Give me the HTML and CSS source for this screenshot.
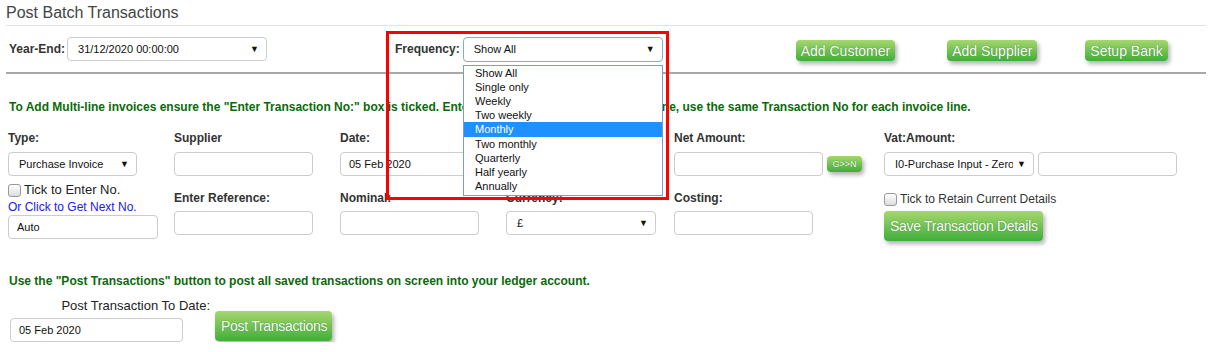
FILE: index.html
```html
<!DOCTYPE html>
<html lang="en">
<head>
    <meta charset="UTF-8">
    <title>Post Batch Transactions</title>
    <link rel="stylesheet" href="styles.css">
</head>
<body>
    <div class="page">
        <h1 class="title">Post Batch Transactions</h1>

        <div class="topbar">
            <div class="field-inline">
                <span class="lbl">Year-End:</span>
                <div class="select year"><span>31/12/2020 00:00:00</span><span class="arrow">&#9660;</span></div>
            </div>
            <div class="field-inline freq">
                <span class="lbl">Frequency:</span>
                <div class="select focus"><span>Show All</span><span class="arrow">&#9660;</span></div>
                <ul class="options">
                    <li>Show All</li>
                    <li>Single only</li>
                    <li>Weekly</li>
                    <li>Two weekly</li>
                    <li class="selected">Monthly</li>
                    <li>Two monthly</li>
                    <li>Quarterly</li>
                    <li>Half yearly</li>
                    <li>Annually</li>
                </ul>
                <div class="highlight"></div>
            </div>
            <div class="actions">
                <button class="gbtn">Add Customer</button>
                <button class="gbtn">Add Supplier</button>
                <button class="gbtn">Setup Bank</button>
            </div>
        </div>

        <p class="note">To Add Multi-line invoices ensure the "Enter Transaction No:" box is ticked. Enter the number on the first invoice line, use the same Transaction No for each invoice line.</p>

        <div class="form">
            <div class="cell">
                <label class="flbl">Type:</label>
                <div class="select type"><span>Purchase Invoice</span><span class="arrow">&#9660;</span></div>
            </div>
            <div class="cell">
                <label class="flbl">Supplier</label>
                <div class="input"></div>
            </div>
            <div class="cell">
                <label class="flbl">Date:</label>
                <div class="input wide">05 Feb 2020</div>
            </div>
            <div class="cell">
                <label class="flbl">Reference:</label>
                <div class="input"></div>
            </div>
            <div class="cell">
                <label class="flbl">Net Amount:</label>
                <div class="with-btn">
                    <div class="input net"></div>
                    <button class="gbtn tiny">G&gt;&gt;N</button>
                </div>
            </div>
            <div class="cell">
                <label class="flbl">Vat:Amount:</label>
                <div class="with-btn">
                    <div class="select vat"><span class="clip">I0-Purchase Input - Zero</span><span class="arrow">&#9660;</span></div>
                    <div class="input"></div>
                </div>
            </div>

            <div class="cell">
                <label class="tick big"><span class="box"></span>Tick to Enter No.</label>
                <a class="link">Or Click to Get Next No.</a>
                <div class="input auto">Auto</div>
            </div>
            <div class="cell low">
                <label class="flbl">Enter Reference:</label>
                <div class="input"></div>
            </div>
            <div class="cell low">
                <label class="flbl">Nominal:</label>
                <div class="input"></div>
            </div>
            <div class="cell low">
                <label class="flbl">Currency:</label>
                <div class="select cur"><span>&pound;</span><span class="arrow">&#9660;</span></div>
            </div>
            <div class="cell low">
                <label class="flbl">Costing:</label>
                <div class="input"></div>
            </div>
            <div class="cell retain">
                <label class="tick"><span class="box"></span>Tick to Retain Current Details</label>
                <button class="gbtn large">Save Transaction Details</button>
            </div>
        </div>

        <p class="note post-note">Use the "Post Transactions" button to post all saved transactions on screen into your ledger account.</p>

        <div class="post">
            <div class="post-field">
                <span class="post-lbl">Post Transaction To Date:</span>
                <div class="input post-date">05 Feb 2020</div>
            </div>
            <button class="gbtn large post-btn">Post Transactions</button>
        </div>
    </div>
</body>
</html>
```
FILE: styles.css
```css
* {
    margin: 0;
    padding: 0;
    box-sizing: border-box;
    font-family: 'Liberation Sans', Arial, sans-serif;
}

body {
    background: #fff;
    color: #333;
}

.page {
    padding: 4px 2px 0 6px;
    width: 1208px;
}

.title {
    font-size: 16px;
    font-weight: normal;
    color: #444;
    line-height: 18px;
    padding-bottom: 3px;
    border-bottom: 1px solid #e2e2e2;
}

.topbar {
    display: flex;
    align-items: center;
    height: 48px;
    padding: 0 0 0 3px;
    border-bottom: 2px solid #a8a8a8;
}

.field-inline {
    display: flex;
    align-items: center;
    gap: 4px;
}

.lbl {
    font-size: 12px;
    font-weight: bold;
    color: #333;
}

.select {
    display: flex;
    justify-content: space-between;
    align-items: center;
    height: 24px;
    padding: 0 7px 0 10px;
    border: 1px solid #ccc;
    border-radius: 4px;
    font-size: 11px;
    color: #111;
    background: #fff;
    white-space: nowrap;
    overflow: hidden;
}

.clip {
    flex: 1;
    min-width: 0;
    overflow: hidden;
}

.arrow {
    font-size: 9px;
    padding-left: 4px;
    color: #111;
}

.year {
    width: 200px;
    margin-left: -2px;
}

.freq {
    position: relative;
    margin-left: 128px;
}

.focus {
    width: 200px;
    height: 25px;
    margin-left: -1px;
    border-color: #7aaee0;
}

.options {
    position: absolute;
    left: 68px;
    top: 28px;
    width: 200px;
    list-style: none;
    background: #fff;
    border: 1px solid #7a9cd3;
    font-size: 11px;
    color: #111;
    z-index: 2;
    padding: 0 0 2px;
}

.options li {
    line-height: 14.2px;
    padding-left: 11px;
}

.options .selected {
    background: #1e90ff;
    color: #fff;
}

.highlight {
    position: absolute;
    left: -9px;
    top: -6px;
    width: 283px;
    height: 169px;
    border: 3px solid #f00;
    z-index: 3;
    pointer-events: none;
}

.actions {
    display: flex;
    gap: 52px;
    margin-left: 133px;
    margin-top: 3px;
}

.actions .gbtn:nth-child(3) {
    margin-left: -4px;
}

.gbtn {
    border: none;
    border-radius: 4px;
    background: linear-gradient(#a6d76d, #3fae3a);
    color: #fff;
    font-size: 14px;
    padding: 0 5px;
    height: 21px;
    white-space: nowrap;
    text-shadow: 0 0 1px #2f6e22;
    box-shadow: 2px 3px 4px rgba(0, 0, 0, 0.3);
    cursor: pointer;
}

.tiny {
    font-size: 9px;
    height: 16px;
    width: 35px;
    padding: 0;
}

.large {
    font-size: 14px;
    letter-spacing: -0.3px;
    height: 30px;
    padding: 0 6px;
}

.note {
    font-size: 12px;
    font-weight: bold;
    color: #0a6a0a;
    padding: 26px 0 0 3px;
    line-height: 14px;
}

.form {
    display: grid;
    grid-template-columns: 166px 166px 166px 168px 210px 320px;
    padding: 17px 0 0 2px;
    row-gap: 7px;
}

.cell {
    display: flex;
    flex-direction: column;
}

.flbl {
    font-size: 12px;
    font-weight: bold;
    color: #333;
    line-height: 14px;
    margin-bottom: 7px;
}

.input {
    height: 24px;
    width: 139px;
    border: 1px solid #ccc;
    border-radius: 4px;
    font-size: 11px;
    color: #111;
    padding: 5px 8px;
    line-height: 12px;
    background: #fff;
}

.wide {
    width: 142px;
}

.type {
    width: 129px;
}

.with-btn {
    display: flex;
    align-items: center;
    gap: 4px;
}

.net {
    width: 149px;
}

.vat {
    width: 150px;
}

.cur {
    width: 150px;
}

.tick {
    display: flex;
    align-items: center;
    font-size: 12px;
    color: #333;
    gap: 3px;
    line-height: 14px;
}

.big {
    font-size: 13px;
    color: #222;
}

.box {
    width: 13px;
    height: 13px;
    border: 1px solid #999;
    border-radius: 3px;
    background: linear-gradient(#fff, #ddd);
}

.link {
    font-size: 12px;
    color: #2020e8;
    line-height: 14px;
    margin: 3px 0 1px;
}

.auto {
    width: 150px;
}

.low {
    padding-top: 8px;
}

.low .flbl {
    margin-bottom: 6px;
}

.retain {
    padding-top: 9px;
    gap: 5px;
}

.retain .gbtn {
    align-self: flex-start;
    width: 159px;
}

.post-note {
    padding-top: 33px;
}

.post {
    display: flex;
    align-items: flex-end;
    gap: 5px;
    padding: 10px 0 0 4px;
}

.post-field {
    display: flex;
    flex-direction: column;
    width: 200px;
    gap: 5px;
}

.post-lbl {
    align-self: flex-end;
    font-size: 13px;
    color: #222;
    line-height: 15px;
}

.post-date {
    width: 173px;
}

.post-btn {
    width: 117px;
    margin-bottom: 1px;
}
```
